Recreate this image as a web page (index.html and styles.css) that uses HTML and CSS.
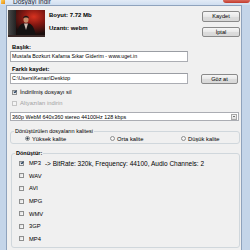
FILE: index.html
```html
<!DOCTYPE html>
<html lang="tr">
<head>
    <meta charset="UTF-8">
    <title>Dosyayı İndir</title>
    <link rel="stylesheet" href="styles.css">
</head>
<body>
    <div class="window">
        <div class="titlebar">
            <span class="app-icon"></span>
            <span class="title">Dosyayı İndir</span>
            <span class="close"></span>
        </div>

        <div class="client">
            <div class="top">
                <svg class="thumb" viewBox="0 0 37 27" width="37" height="27">
                    <defs>
                        <radialGradient id="glow" cx="0.7" cy="0.25" r="0.65">
                            <stop offset="0" stop-color="#d8321f"/>
                            <stop offset="0.45" stop-color="#861812"/>
                            <stop offset="1" stop-color="#1c0e0d"/>
                        </radialGradient>
                        <linearGradient id="side" x1="0" x2="1">
                            <stop offset="0" stop-color="#4a4a4a"/>
                            <stop offset="1" stop-color="#222"/>
                        </linearGradient>
                    </defs>
                    <rect width="37" height="27" fill="url(#glow)"/>
                    <rect width="8" height="27" fill="url(#side)"/>
                    <path d="M8 27 C9 20 11 15 14.5 13.5 L21.5 13.5 C25 15 27 20 28 27 Z" fill="#151212"/>
                    <path d="M16 13.5 L18 20 L20 13.5 Z" fill="#cdbab0"/>
                    <ellipse cx="18" cy="9.5" rx="2.5" ry="3.2" fill="#c48a68"/>
                    <path d="M15.2 8.5 C14.8 4.8 21.2 4.8 20.8 8.5 C20 7 16 7 15.2 8.5 Z" fill="#1d1111"/>
                    <rect y="25" width="37" height="2" fill="#3a2a28"/>
                </svg>
                <div class="meta">
                    <div>Boyut: 7.72 Mb</div>
                    <div>Uzantı: webm</div>
                </div>
                <div class="actions">
                    <button class="btn">Kaydet</button>
                    <button class="btn">İptal</button>
                </div>
            </div>

            <div class="label">Başlık:</div>
            <div class="row">
                <div class="textbox">Mustafa Bozkurt Kafama Sıkar Giderim - www.uget.in</div>
            </div>

            <div class="label label-tight">Farklı kaydet:</div>
            <div class="row">
                <div class="textbox">C:\Users\Kenan\Desktop</div>
                <button class="btn btn-browse">Göz at</button>
            </div>

            <div class="check">
                <span class="box checked"></span>
                <span>İndirilmiş dosyayı sil</span>
            </div>
            <div class="check check-second disabled">
                <span class="box"></span>
                <span>Altyazıları indirin</span>
            </div>

            <div class="select">
                <span>360p WebM 640x360 stereo 44100Hz 128 kbps</span>
                <span class="arrow"></span>
            </div>

            <fieldset class="group quality">
                <legend>Dönüştürülen dosyaların kalitesi</legend>
                <div class="options">
                    <div class="option opt-high"><span class="radio on"></span>Yüksek kalite</div>
                    <div class="option opt-mid"><span class="radio"></span>Orta kalite</div>
                    <div class="option"><span class="radio"></span>Düşük kalite</div>
                </div>
            </fieldset>

            <fieldset class="group convert">
                <legend>Dönüştür:</legend>
                <div class="list">
                    <div class="item"><span class="box checked"></span>MP3<span class="detail">-&gt; BitRate: 320k, Frequency: 44100, Audio Channels: 2</span></div>
                    <div class="item"><span class="box"></span>WAV</div>
                    <div class="item"><span class="box"></span>AVI</div>
                    <div class="item"><span class="box"></span>MPG</div>
                    <div class="item"><span class="box"></span>WMV</div>
                    <div class="item"><span class="box"></span>3GP</div>
                    <div class="item"><span class="box"></span>MP4</div>
                </div>
            </fieldset>
        </div>
    </div>
</body>
</html>
```

FILE: styles.css
```css
* {
    box-sizing: border-box;
}

body {
    margin: 0;
    width: 250px;
    height: 250px;
    overflow: hidden;
    background: #c4d5e9;
    font-family: "Liberation Sans", Arial, sans-serif;
    font-size: 5.8px;
    color: #000;
}

.window {
    display: flex;
    flex-direction: column;
    height: 250px;
}

/* title bar, cut off at the top */
.titlebar {
    height: 5px;
    display: flex;
    align-items: flex-start;
    background: linear-gradient(#e2ebf6, #d0def0);
    overflow: hidden;
}

.app-icon {
    width: 4px;
    height: 4px;
    margin-left: 1px;
    background: linear-gradient(135deg, #ffd35a, #e58a12);
}

.title {
    margin-left: 8px;
    margin-top: -2px;
    font-size: 6.5px;
    line-height: 7px;
    color: #1e2a3a;
}

.close {
    margin-left: auto;
    width: 27px;
    height: 3px;
    background: linear-gradient(#d9695c, #c0392b);
    border-radius: 0 0 3px 3px;
}

.client {
    flex: 1;
    margin: 0 8px 0 6px;
    padding: 4px 1px 0 3px;
    background: #f0f0f0;
    border: 1px solid #8fa3bd;
    border-bottom: none;
}

.top {
    display: flex;
    height: 27px;
}

.thumb {
    display: block;
    margin-left: -2px;
}

.meta {
    display: flex;
    flex-direction: column;
    gap: 3px;
    margin-left: 4px;
    font-weight: bold;
    font-size: 6px;
    line-height: 10px;
}

.actions {
    margin-left: auto;
    padding-top: 1px;
    display: flex;
    flex-direction: column;
    gap: 5px;
}

.btn {
    width: 38px;
    height: 11px;
    padding: 0;
    font-family: inherit;
    font-size: 5.6px;
    color: #000;
    background: linear-gradient(#f6f6f6 0%, #e8e8e8 50%, #dcdcdc 51%, #d8d8d8 100%);
    border: 1px solid #8a8a8a;
    border-radius: 2px;
}

.btn-browse {
    width: 37px;
    height: 10px;
    margin-left: auto;
    margin-right: 2px;
    margin-top: 1px;
}

.label {
    margin-top: 6px;
    padding-left: 2px;
    font-weight: bold;
    line-height: 8px;
}

.label-tight {
    margin-top: 3px;
}

.row {
    display: flex;
    align-items: center;
}

.textbox {
    width: 178px;
    height: 11px;
    padding-left: 1px;
    background: #fff;
    border: 1px solid #abadb3;
    border-top-color: #9a9da3;
    font-size: 5.3px;
    line-height: 9px;
    white-space: nowrap;
    overflow: hidden;
}

.check {
    display: flex;
    align-items: center;
    gap: 3px;
    height: 8px;
    margin-top: 4px;
    padding-left: 2px;
}

.check-second {
    margin-top: 3px;
}

.disabled {
    color: #a2a2a2;
}

.box {
    position: relative;
    flex: none;
    width: 5px;
    height: 5px;
    border: 1px solid #8e8f8f;
    background: linear-gradient(135deg, #dcdcdc, #fdfdfd);
}

.disabled .box {
    border-color: #c5c5c5;
    background: #f4f4f4;
}

/* check mark drawn over the box */
.box.checked::after {
    content: "";
    position: absolute;
    left: 0.6px;
    top: -0.4px;
    width: 1.4px;
    height: 2.4px;
    border: solid #1e3a5a;
    border-width: 0 0.9px 0.9px 0;
    transform: rotate(40deg);
}

.select {
    display: flex;
    align-items: center;
    height: 9px;
    margin-top: 5px;
    margin-right: 1px;
    padding-left: 1px;
    background: #fff;
    border: 1px solid #abadb3;
    font-size: 5.4px;
}

.arrow {
    margin-left: auto;
    margin-right: 1px;
    width: 6px;
    height: 6px;
    border: 1px solid #a9a9a9;
    background: linear-gradient(#f4f4f4, #dedede);
    display: flex;
    align-items: center;
    justify-content: center;
}

.arrow::after {
    content: "";
    border-left: 1.5px solid transparent;
    border-right: 1.5px solid transparent;
    border-top: 1.5px solid #000;
}

.group {
    margin: 7px 0 0 0;
    padding: 0;
    border: 1px solid #d0d7dc;
    border-radius: 3px;
    min-width: 0;
}

.group legend {
    margin-left: 3px;
    padding: 0 1px;
    line-height: 6px;
    font-size: 5.5px;
}

.options {
    display: flex;
    align-items: center;
    height: 9px;
    padding-left: 14px;
}

.option {
    display: flex;
    align-items: center;
    gap: 2px;
}

.opt-high {
    width: 85px;
}

.opt-mid {
    width: 71px;
}

.radio {
    width: 5px;
    height: 5px;
    border-radius: 50%;
    border: 1px solid #8e8f8f;
    background: #f5f5f5;
}

.radio.on {
    background: radial-gradient(circle, #2a3a4a 0 0.9px, #f5f5f5 1.2px);
}

.convert {
    margin: 6px 0 0 1px;
}

.convert legend {
    font-weight: bold;
}

.list {
    padding: 1px 0 2px 7px;
}

.item {
    display: flex;
    align-items: center;
    gap: 5px;
    height: 12.6px;
}

.detail {
    margin-left: -1px;
    font-size: 6.5px;
}
```
